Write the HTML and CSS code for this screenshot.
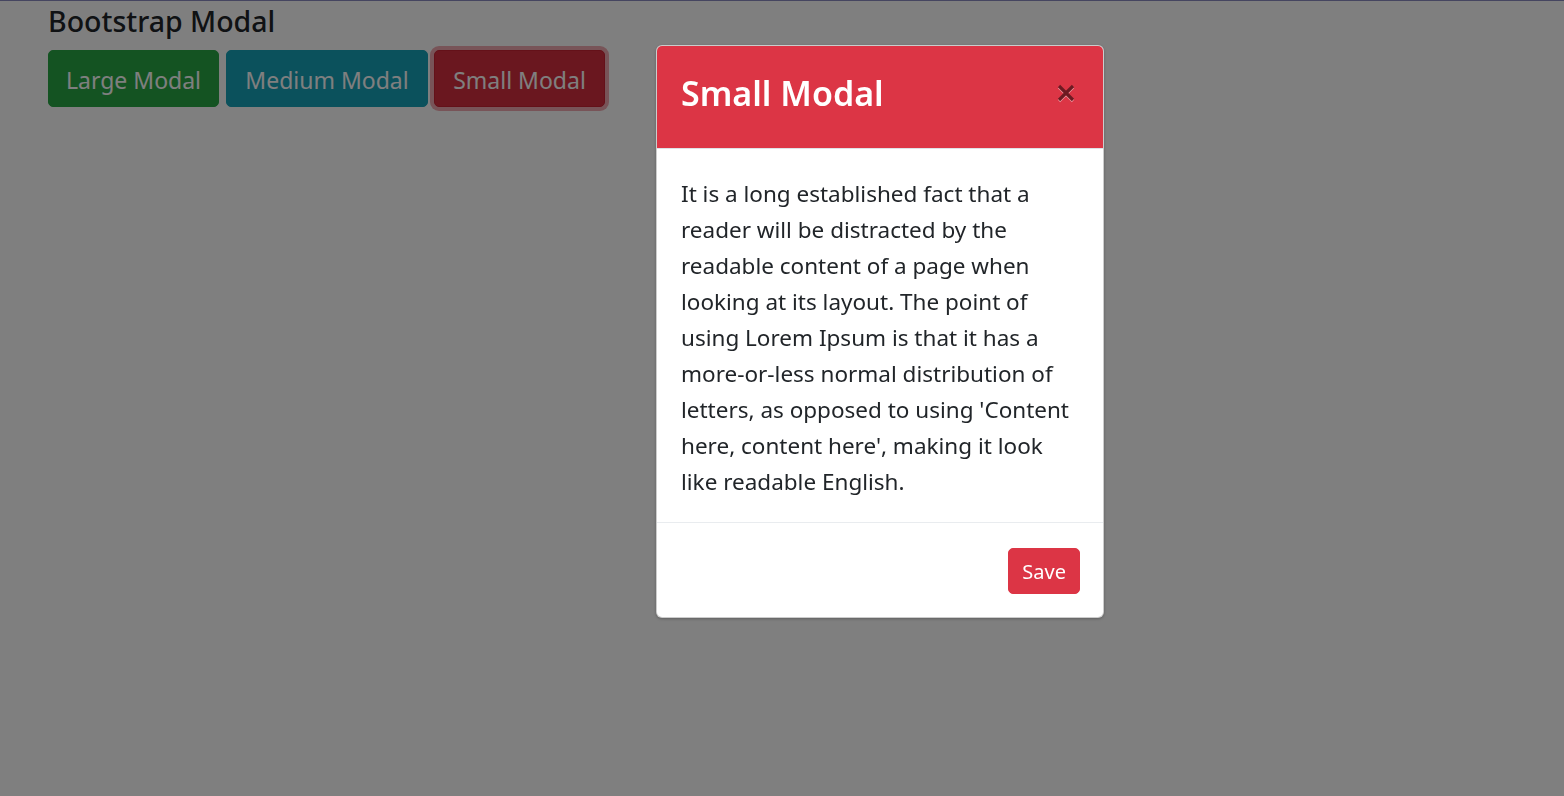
FILE: index.html
```html
<!DOCTYPE html>
<html lang="en">
<head>
<meta charset="utf-8">
<title>Bootstrap Modal</title>
<link rel="stylesheet" href="styles.css">
</head>
<body>
  <div class="page">
    <h3 class="page-title">Bootstrap Modal</h3>
    <div class="btn-row">
      <button class="btn btn-success btn-lg-modal">Large Modal</button>
      <button class="btn btn-info btn-md-modal">Medium Modal</button>
      <button class="btn btn-danger btn-focus btn-sm-modal">Small Modal</button>
    </div>
  </div>
  <div class="backdrop"></div>
  <div class="modal">
    <div class="modal-header">
      <h5 class="modal-title">Small Modal</h5>
      <button class="close" aria-label="Close">
        <svg width="18" height="19" viewBox="0 0 18 19">
          <g stroke="#fff" stroke-width="3.2" stroke-linecap="butt">
            <line x1="2" y1="3" x2="16" y2="17"/>
            <line x1="16" y1="3" x2="2" y2="17"/>
          </g>
          <g stroke="#000" stroke-width="3.2" stroke-linecap="butt">
            <line x1="2" y1="2" x2="16" y2="16"/>
            <line x1="16" y1="2" x2="2" y2="16"/>
          </g>
        </svg>
      </button>
    </div>
    <div class="modal-body">
      <p>It is a long established fact that a<br>reader will be distracted by the<br>readable content of a page when<br>looking at its layout. The point of<br>using Lorem Ipsum is that it has a<br>more-or-less normal distribution of<br>letters, as opposed to using 'Content<br>here, content here', making it look<br>like readable English.</p>
    </div>
    <div class="modal-footer">
      <button class="btn btn-danger btn-save">Save</button>
    </div>
  </div>
</body>
</html>
```
FILE: styles.css
```css
html, body {
  margin: 0;
  padding: 0;
  height: 100%;
}
body {
  background: #fff;
  font-family: "Noto Sans", "Open Sans", sans-serif;
  color: #212529;
  border-top: 1px solid #8a8ac0;
  box-sizing: border-box;
}
.page {
  padding: 0 48px;
}
.page-title {
  margin: 0;
  padding-top: 2px;
  font-size: 28.5px;
  font-weight: 500;
  line-height: 36px;
  color: #212529;
}
.btn-row {
  display: flex;
  gap: 7px;
  margin-top: 11px;
}
.btn {
  font-family: inherit;
  border: 1px solid transparent;
  border-radius: 5px;
  color: #fff;
  cursor: pointer;
}
.btn-row .btn {
  font-size: 23px;
  line-height: 33px;
  padding: 13px 0 9px;
  text-align: center;
}
.btn-lg-modal { width: 171px; }
.btn-md-modal { width: 202px; }
.btn-sm-modal { width: 171px; }
.btn-success { background: #28a745; border-color: #28a745; }
.btn-info { background: #17a2b8; border-color: #17a2b8; }
.btn-danger { background: #dc3545; border-color: #dc3545; }
.btn-focus {
  background: #d42f3f;
  border-color: #c82333;
  box-shadow: 0 0 0 4px rgba(225, 83, 97, 0.5);
  margin-left: -1px;
}
.backdrop {
  position: fixed;
  inset: 0;
  background: rgba(0, 0, 0, 0.5);
}
.modal {
  position: absolute;
  left: 656px;
  top: 45px;
  width: 446px;
  background: #fff;
  border: 1px solid rgba(0, 0, 0, 0.2);
  border-radius: 6px;
  overflow: hidden;
  box-shadow: 0 1px 3px rgba(0, 0, 0, 0.25);
}
.modal-header {
  display: flex;
  align-items: center;
  justify-content: space-between;
  background: #dc3545;
  padding: 20px 24px 28px 24px;
  border-bottom: 1px solid #dee2e6;
}
.modal-title {
  margin: 0;
  color: #fff;
  font-size: 34px;
  font-weight: 600;
  line-height: 54px;
}
.close {
  background: none;
  border: 0;
  padding: 0;
  margin-right: 4px;
  opacity: 0.5;
  display: flex;
  line-height: 0;
}
.modal-body {
  padding: 27px 24px 22px;
}
.modal-body p {
  margin: 0;
  font-size: 22.5px;
  line-height: 36px;
  color: #212529;
}
.modal-footer {
  display: flex;
  justify-content: flex-end;
  padding: 25px 23px 23px 24px;
  border-top: 1px solid #e9ecef;
}
.btn-save {
  font-size: 20px;
  line-height: 30px;
  padding: 8px 13px 6px;
}
```
